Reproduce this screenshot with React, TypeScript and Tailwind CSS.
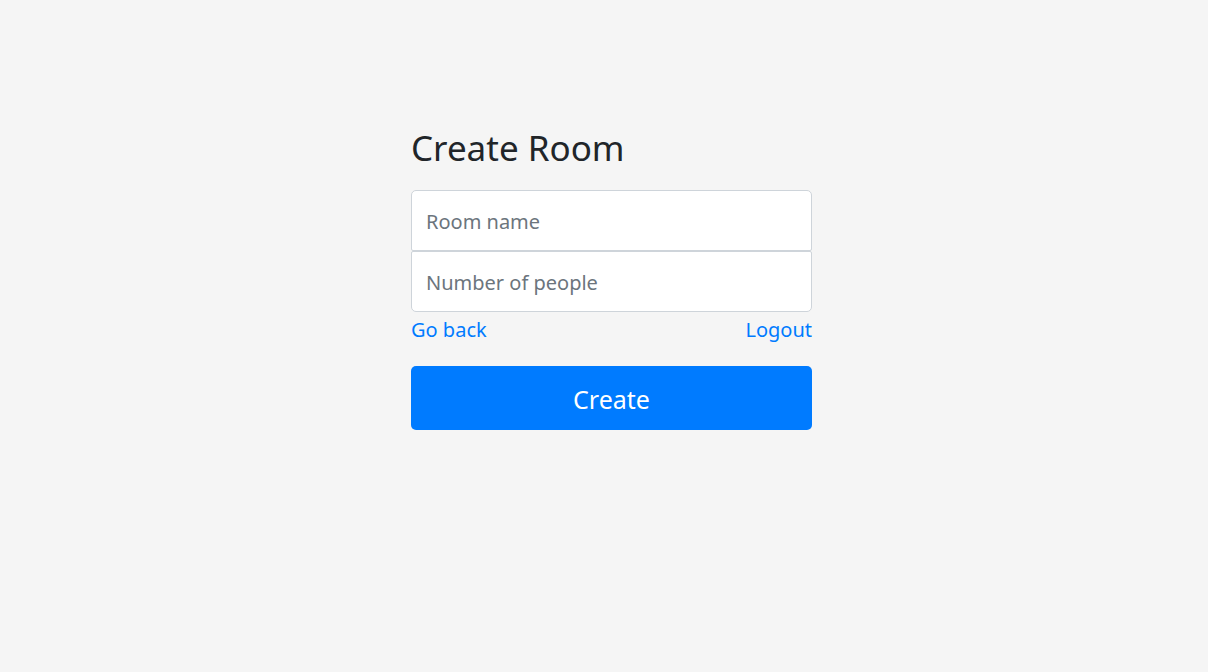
export default function App() {
  return (
    <div
      className="flex min-h-[672px] w-full justify-center bg-[#f5f5f5] pl-[15px] text-[#212529]"
      style={{ fontFamily: '"Noto Sans", "Open Sans", sans-serif' }}
    >
      <div className="w-[401px] pt-[122px]">
        <h1 className="mb-[16px] text-[35px] font-normal leading-[52px]">Create Room</h1>
        <div className="flex flex-col">
          <input
            className="h-[61px] w-full rounded-t-[5px] rounded-b-[2px] border border-[#ced4da] bg-white px-[14px] pt-[1px] text-[20px] text-[#495057] outline-none placeholder:text-[#6c757d]"
            placeholder="Room name"
          />
          <input
            className="h-[61px] w-full rounded-b-[5px] rounded-t-[2px] border border-[#ced4da] bg-white px-[14px] pt-[1px] text-[20px] text-[#495057] outline-none placeholder:text-[#6c757d]"
            placeholder="Number of people"
          />
        </div>
        <div className="mt-[3px] flex justify-between text-[20px] leading-[30px] text-[#007bff]">
          <a href="#">Go back</a>
          <a href="#">Logout</a>
        </div>
        <button className="mt-[21px] h-[64px] w-full rounded-[5px] bg-[#007bff] pt-[3px] text-[25px] text-white">
          Create
        </button>
      </div>
    </div>
  );
}
